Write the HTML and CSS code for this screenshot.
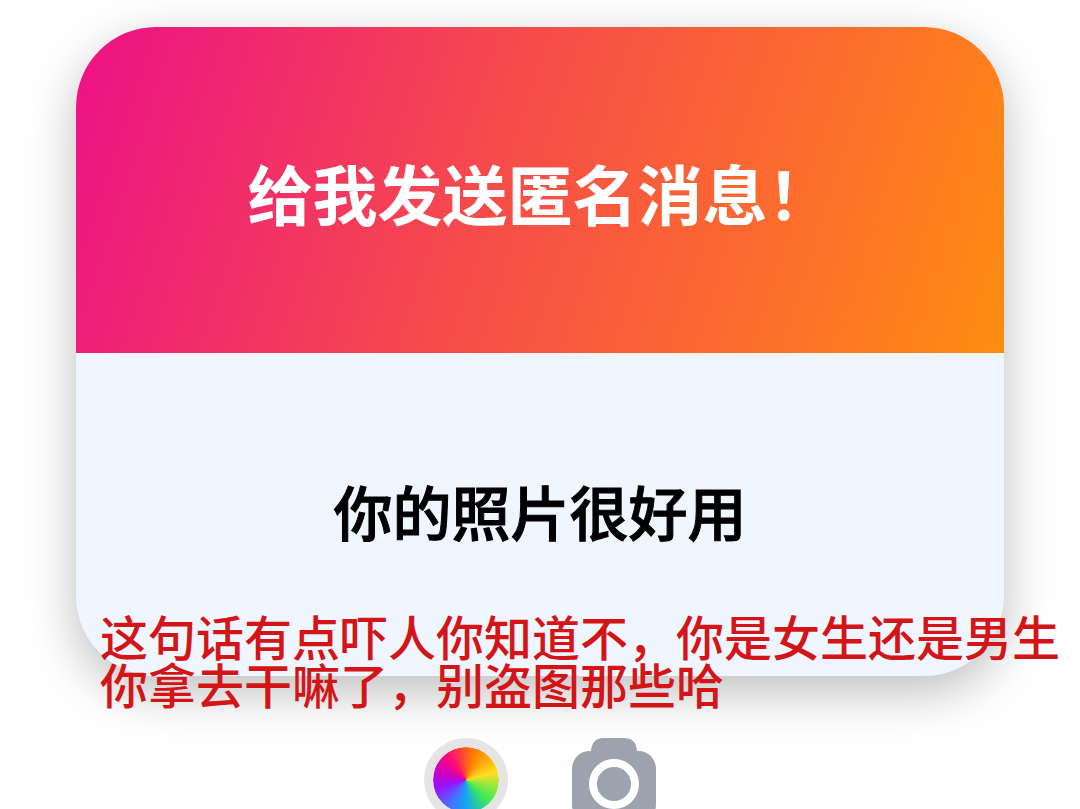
FILE: index.html
```html
<!DOCTYPE html>
<html lang="zh-CN">
<head>
    <meta charset="UTF-8">
    <meta name="viewport" content="width=device-width, initial-scale=1.0">
    <title>匿名消息</title>
    <link rel="stylesheet" href="styles.css">
</head>
<body>

    <main class="story">
        <section class="card">
            <h1 class="card-title">给我发送匿名消息！</h1>
            <p class="card-message">你的照片很好用</p>
        </section>

        <p class="caption">这句话有点吓人你知道不，你是女生还是男生<br>你拿去干嘛了，别盗图那些哈</p>

        <div class="tools">
            <button class="color-btn" type="button" aria-label="颜色"></button>
            <button class="camera-btn" type="button" aria-label="相机">
                <svg width="84" height="84" viewBox="0 0 84 84">
                    <path d="M19 13 Q20 0 32 0 H52 Q64 0 65 13 C76 12 84 21 84 31 V66 Q84 84 66 84 H18 Q0 84 0 66 V31 C0 21 8 12 19 13 Z" fill="#9ca3af"/>
                    <circle cx="42" cy="46" r="21" fill="none" stroke="#fff" stroke-width="8"/>
                </svg>
            </button>
        </div>
    </main>

</body>
</html>
```

FILE: styles.css
```css
* {
    box-sizing: border-box;
}
body {
    margin: 0;
    background-color: #fff;
    font-family: "Noto Sans CJK SC", sans-serif;
    overflow: hidden;
}
.story {
    position: relative;
    padding: 27px 76px 0;
}
.card {
    border-radius: 80px;
    overflow: hidden;
    background-color: #eff6ff;
    box-shadow: 0 16px 50px rgba(0, 0, 0, 0.26);
}
.card-title,
.card-message {
    display: flex;
    align-items: center;
    justify-content: center;
    margin: 0;
}
.card-title {
    height: 326px;
    padding-top: 4px;
    background: linear-gradient(108deg, #ec1187, #f64c4a 45%, #fd7328 80%, #ff8d10);
    color: #fff;
    font-size: 65px;
    font-weight: 700;
}
.card-message {
    height: 323px;
    padding-bottom: 8px;
    color: #000;
    font-size: 59px;
    font-weight: 500;
    -webkit-text-stroke: 1px #000;
}
.caption {
    position: absolute;
    top: 611px;
    left: 100px;
    margin: 0;
    color: #d31518;
    font-size: 48px;
    font-weight: 500;
    line-height: 48px;
    white-space: nowrap;
}
.tools {
    display: flex;
    align-items: flex-start;
    justify-content: center;
    gap: 64px;
    margin-top: 62px;
}
button {
    padding: 0;
    border: none;
    background: none;
    cursor: pointer;
}
.color-btn {
    width: 84px;
    height: 84px;
    border: 9px solid #e5e5e5;
    border-radius: 50%;
    background: conic-gradient(#ff5a1f, #ff8a00 25deg, #ffdf20 75deg, #9be83a 100deg, #3de85a 135deg, #12a5f5 180deg, #4a6cff 215deg, #9a10ff 255deg, #d400b8 290deg, #ff0a78 325deg, #ff5a1f) padding-box;
}
.camera-btn svg {
    display: block;
}
```
